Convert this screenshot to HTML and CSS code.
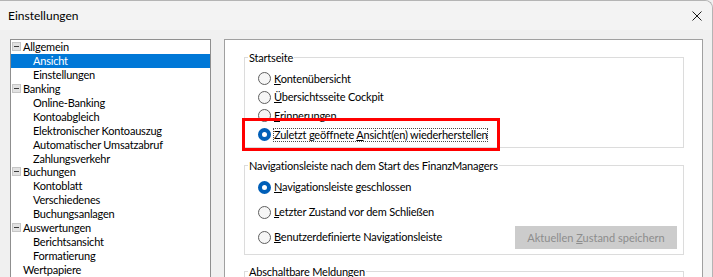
FILE: index.html
```html
<!DOCTYPE html>
<html lang="de">
<head>
<meta charset="utf-8">
<title>Einstellungen</title>
<link rel="stylesheet" href="styles.css">
</head>
<body>
<div class="window">
  <div class="titlebar">
    <span class="title">Einstellungen</span>
    <button class="close" aria-label="Schließen">
      <svg width="10" height="10" viewBox="0 0 10 10"><path d="M0.5 0.5L9.5 9.5M9.5 0.5L0.5 9.5" stroke="#1a1a1a" stroke-width="1" fill="none"/></svg>
    </button>
  </div>
  <div class="body">
    <ul class="tree">
      <li class="node"><span class="exp"></span>Allgemein</li>
      <li class="leaf selected">Ansicht</li>
      <li class="leaf">Einstellungen</li>
      <li class="node"><span class="exp"></span>Banking</li>
      <li class="leaf">Online-Banking</li>
      <li class="leaf">Kontoabgleich</li>
      <li class="leaf">Elektronischer Kontoauszug</li>
      <li class="leaf">Automatischer Umsatzabruf</li>
      <li class="leaf">Zahlungsverkehr</li>
      <li class="node"><span class="exp"></span>Buchungen</li>
      <li class="leaf">Kontoblatt</li>
      <li class="leaf">Verschiedenes</li>
      <li class="leaf">Buchungsanlagen</li>
      <li class="node"><span class="exp"></span>Auswertungen</li>
      <li class="leaf">Berichtsansicht</li>
      <li class="leaf">Formatierung</li>
      <li class="root-leaf">Wertpapiere</li>
    </ul>
    <div class="panel">
      <fieldset class="group g-start">
        <legend>Startseite</legend>
        <label class="opt"><span class="radio"></span><span class="lbl"><u>K</u>ontenübersicht</span></label>
        <label class="opt"><span class="radio"></span><span class="lbl"><u>Ü</u>bersichtsseite Cockpit</span></label>
        <label class="opt"><span class="radio"></span><span class="lbl"><u>E</u>rinnerungen</span></label>
        <label class="opt"><span class="radio on"></span><span class="lbl focus">Zuletzt geöffnete <u>A</u>nsicht(en) wiederherstellen</span><span class="mark"></span></label>
      </fieldset>
      <fieldset class="group g-nav">
        <legend>Navigationsleiste nach dem Start des FinanzManagers</legend>
        <label class="opt"><span class="radio on"></span><span class="lbl"><u>N</u>avigationsleiste geschlossen</span></label>
        <label class="opt"><span class="radio"></span><span class="lbl"><u>L</u>etzter Zustand vor dem Schließen</span></label>
        <div class="opt"><span class="radio"></span><span class="lbl"><u>B</u>enutzerdefinierte Navigationsleiste</span><button class="btn" disabled>Aktuellen <u>Z</u>ustand speichern</button></div>
      </fieldset>
      <fieldset class="group g-msg">
        <legend>Abschaltbare Meldungen</legend>
        <div class="empty"></div>
      </fieldset>
    </div>
  </div>
</div>
</body>
</html>
```

FILE: styles.css
```css
html, body {
  margin: 0;
  padding: 0;
}
body {
  background: #f0f0f0;
  font-family: Lato, "Liberation Sans", sans-serif;
  font-size: 11px;
  letter-spacing: -0.2px;
  color: #000;
}
.window {
  width: 713px;
  height: 277px;
  box-sizing: border-box;
  border-top: 1px solid #b4b4b4;
  border-right: 1px solid #b4b4b4;
  border-top-right-radius: 8px;
  background: #f0f0f0;
  overflow: hidden;
}
.titlebar {
  height: 29px;
  display: flex;
  align-items: center;
  padding-left: 8px;
  background: #f3f3f3;
}
.title {
  flex: 1;
  font-size: 12px;
  letter-spacing: 0;
}
.close {
  width: 30px;
  height: 29px;
  display: flex;
  align-items: center;
  justify-content: center;
  border: 0;
  background: none;
  padding: 0;
}
.body {
  display: flex;
  align-items: flex-start;
  gap: 13px;
  padding: 9px 9px 0 10px;
}
.tree {
  flex: none;
  width: 201px;
  height: 260px;
  box-sizing: border-box;
  margin: 0;
  padding: 0;
  list-style: none;
  border: 1px solid #8f8f8f;
  background: #fff;
}
.tree li {
  height: 13.9px;
  display: flex;
  align-items: center;
  white-space: nowrap;
  line-height: 13px;
}
.tree .node {
  padding-left: 1px;
}
.tree .leaf {
  padding-left: 22px;
}
.tree .root-leaf {
  padding-left: 12px;
}
.tree .selected {
  background: #0078d7;
  color: #fff;
}
.exp {
  width: 9px;
  height: 9px;
  box-sizing: border-box;
  margin-right: 2px;
  border: 1px solid #c6c6c6;
  background: #e2e2e2;
  display: flex;
  align-items: center;
  justify-content: center;
}
.exp::after {
  content: "";
  width: 5px;
  height: 1px;
  background: #3c3c3c;
}
.panel {
  flex: none;
  width: 479px;
  height: 260px;
  box-sizing: border-box;
  border: 1px solid #a0a0a0;
  background: #fff;
  padding: 10px 18px 0 19px;
}
.group {
  margin: 0;
  padding: 0;
  min-width: 0;
  border: 1px solid #dcdcdc;
}
.group legend {
  padding: 0 1px;
  margin-left: 3px;
  line-height: 15px;
}
.g-start {
  padding: 4.33px 0 3px;
}
.g-start .opt {
  height: 18.67px;
}
.g-nav {
  margin-top: 10px;
  padding: 2px 0 4px;
}
.g-nav .opt {
  height: 25px;
}
.g-msg {
  margin-top: 9px;
}
.empty {
  height: 40px;
}
.opt {
  display: flex;
  align-items: center;
  padding-left: 13px;
  position: relative;
  white-space: nowrap;
}
.radio {
  flex: none;
  width: 13px;
  height: 13px;
  box-sizing: border-box;
  border: 1px solid #5f5f5f;
  border-radius: 50%;
  background: #f6f6f6;
  margin-right: 2px;
}
.radio.on {
  border: 4px solid #005fb8;
  background: #fff;
}
.lbl {
  border: 1px solid transparent;
  line-height: 12px;
}
.lbl.focus {
  border: 1px dotted #4a4a4a;
}
.mark {
  position: absolute;
  left: -3px;
  top: -7.33px;
  width: 258px;
  height: 33px;
  box-sizing: border-box;
  border: 3px solid #ff0000;
}
.btn {
  margin-left: auto;
  margin-right: 6px;
  width: 162px;
  height: 23px;
  border: 0;
  padding: 0;
  background: #cccccc;
  color: #8d8d8d;
  font: inherit;
}
```
